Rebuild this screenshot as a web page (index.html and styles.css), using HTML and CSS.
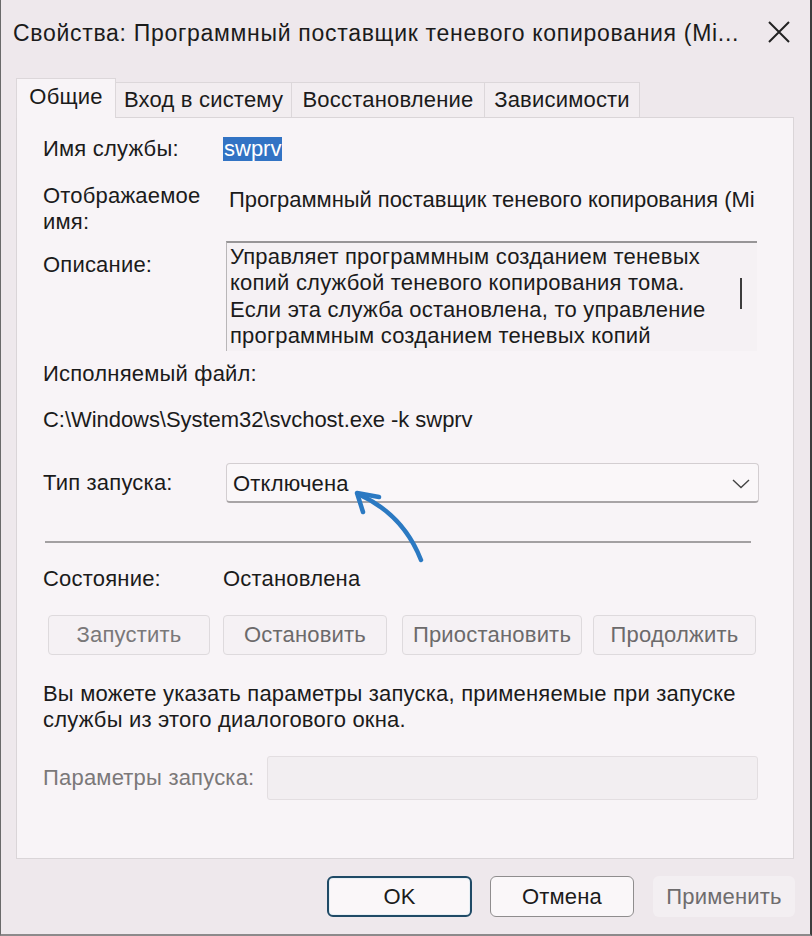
FILE: index.html
```html
<!DOCTYPE html>
<html lang="ru">
<head>
    <meta charset="UTF-8">
    <meta name="viewport" content="width=device-width, initial-scale=1.0">
    <title>Свойства службы</title>
    <link rel="stylesheet" href="styles.css">
</head>
<body>
    <div class="window">
        <div class="titlebar">
            <div class="title">Свойства: Программный поставщик теневого копирования (Mi...</div>
            <svg class="close" width="24" height="24" viewBox="0 0 24 24">
                <path d="M2 2 L22 22 M22 2 L2 22" stroke="#222" stroke-width="2" fill="none"/>
            </svg>
        </div>

        <div class="tabs">
            <div class="tab active tab-general">Общие</div>
            <div class="tab tab-logon">Вход в систему</div>
            <div class="tab tab-recovery">Восстановление</div>
            <div class="tab tab-deps">Зависимости</div>
        </div>

        <div class="panel">
            <div class="row row-name">
                <div class="label">Имя службы:</div>
                <div class="value"><span class="selected">swprv</span></div>
            </div>

            <div class="row row-display">
                <div class="label">Отображаемое<br>имя:</div>
                <div class="value display-name">Программный поставщик теневого копирования (Mi</div>
            </div>

            <div class="row row-desc">
                <div class="label">Описание:</div>
                <div class="desc-box">
                    <div class="desc-text">Управляет программным созданием теневых копий службой теневого копирования тома. Если эта служба остановлена, то управление программным созданием теневых копий</div>
                    <div class="scroll-thumb"></div>
                </div>
            </div>

            <div class="line line-exe">Исполняемый файл:</div>
            <div class="line line-path">C:\Windows\System32\svchost.exe -k swprv</div>

            <div class="row row-startup">
                <div class="label">Тип запуска:</div>
                <div class="dropdown">
                    <span>Отключена</span>
                    <svg width="18" height="10" viewBox="0 0 18 10">
                        <path d="M1 1 L9 8.5 L17 1" stroke="#444" stroke-width="1.4" fill="none"/>
                    </svg>
                </div>
            </div>

            <div class="separator"></div>

            <div class="row row-state">
                <div class="label">Состояние:</div>
                <div class="value">Остановлена</div>
            </div>

            <div class="svc-buttons">
                <div class="btn btn-start">Запустить</div>
                <div class="btn btn-stop">Остановить</div>
                <div class="btn btn-pause">Приостановить</div>
                <div class="btn btn-resume">Продолжить</div>
            </div>

            <div class="hint">Вы можете указать параметры запуска, применяемые при запуске службы из этого диалогового окна.</div>

            <div class="row row-params">
                <div class="label disabled">Параметры запуска:</div>
                <div class="param-input"></div>
            </div>
        </div>

        <div class="footer">
            <div class="fbtn fbtn-ok">OK</div>
            <div class="fbtn fbtn-cancel">Отмена</div>
            <div class="fbtn fbtn-apply">Применить</div>
        </div>

        <!-- стрелка-пометка поверх диалога -->
        <svg class="arrow" width="812" height="936" viewBox="0 0 812 936">
            <path d="M420 560 Q402 514 357 494" stroke="#2b79c2" stroke-width="4.5" fill="none" stroke-linecap="round"/>
            <path d="M378 497 L356 493 L362 512" stroke="#2b79c2" stroke-width="4.5" fill="none" stroke-linecap="round" stroke-linejoin="round"/>
        </svg>
    </div>
</body>
</html>
```

FILE: styles.css
```css
body {
    margin: 0;
    font-family: "Liberation Sans", Arial, sans-serif;
    font-size: 22px;
    letter-spacing: 0.2px;
    line-height: 26px;
    color: #1b1b1b;
    background-color: #efe9ed;
}

.window {
    position: relative;
    width: 809px;
    height: 934px;
    border-left: 1px solid #6a6a6a;
    border-right: 2px solid #3d3d3d;
    border-bottom: 2px solid #8c8a8b;
    background-color: #eee8ec;
    overflow: hidden;
}

.titlebar {
    height: 66px;
    display: flex;
    align-items: center;
    justify-content: space-between;
    padding: 0 19px 0 12px;
}

.title {
    font-size: 23px;
    letter-spacing: 0.7px;
    white-space: nowrap;
}

.close {
    margin-top: -2px;
}

.tabs {
    height: 51px;
    display: flex;
    align-items: flex-end;
    margin-left: 15px;
}

.tab {
    box-sizing: border-box;
    height: 35px;
    display: flex;
    align-items: center;
    justify-content: center;
    background-color: #f2edf0;
    border: 1px solid #dcd7da;
    border-bottom: none;
    border-left: none;
    white-space: nowrap;
}

.tab.active {
    height: 40px;
    margin-bottom: -1px;
    position: relative;
    background-color: #f8f4f7;
    border-left: 1px solid #dcd7da;
    padding-bottom: 3px;
}

.tab-general { width: 100px; }
.tab-logon { width: 176px; }
.tab-recovery { width: 193px; }
.tab-deps { width: 155px; }

.panel {
    box-sizing: border-box;
    margin-left: 15px;
    width: 778px;
    height: 742px;
    background-color: #f8f4f7;
    border: 1px solid #dad5d8;
    padding: 0 0 0 26px;
}

.row {
    display: grid;
    grid-template-columns: 180px 533px;
}

.label {
    white-space: nowrap;
}

.label.disabled {
    color: #7b7879;
}

.row-name {
    margin-top: 18px;
}

.selected {
    display: inline-block;
    background-color: #3273c4;
    color: #fff;
    padding: 0 1px;
    line-height: 24px;
    margin-top: 1px;
    letter-spacing: 0;
}

.row-display {
    margin-top: 21px;
}

.display-name {
    padding-left: 6px;
    padding-top: 4px;
    white-space: nowrap;
    overflow: hidden;
    letter-spacing: -0.05px;
}

.row-desc {
    margin-top: 6px;
}

.row-desc .label {
    padding-top: 11px;
}

.desc-box {
    position: relative;
    box-sizing: border-box;
    margin-left: 3px;
    width: 531px;
    height: 110px;
    border-top: 2px solid #979597;
    border-left: 1px solid #b9b6b8;
    background-color: #f5f1f4;
    padding: 1px 30px 0 3px;
    overflow: hidden;
}

.desc-text {
    line-height: 26.4px;
}

.scroll-thumb {
    position: absolute;
    left: 513px;
    top: 35px;
    width: 2px;
    height: 31px;
    background-color: #3c3c3c;
}

.line-exe {
    margin-top: 10px;
}

.line-path {
    margin-top: 20px;
    letter-spacing: -0.05px;
}

.row-startup {
    margin-top: 30px;
    align-items: center;
}

.dropdown {
    box-sizing: border-box;
    margin-left: 3px;
    width: 533px;
    height: 40px;
    display: flex;
    align-items: center;
    justify-content: space-between;
    padding: 2px 8px 0 6px;
    background-color: #faf7f9;
    border: 1px solid #d3ced1;
    border-bottom: 2px solid #a8a4a6;
    border-radius: 4px;
}

.separator {
    margin-top: 38px;
    margin-left: 2px;
    width: 706px;
    height: 2px;
    background-color: #a3a0a2;
}

.row-state {
    margin-top: 23px;
}

.svc-buttons {
    display: flex;
    margin: 23px 0 0 5px;
}

.btn {
    box-sizing: border-box;
    height: 40px;
    display: flex;
    align-items: center;
    justify-content: center;
    background-color: #f5f1f4;
    border: 1px solid #dedadd;
    border-radius: 4px;
    color: #6c6a6b;
}

.btn-start { width: 162px; color: #7a7879; }
.btn-stop { width: 164px; margin-left: 13px; }
.btn-pause { width: 180px; margin-left: 15px; }
.btn-resume { width: 163px; margin-left: 11px; }

.hint {
    margin-top: 26px;
    width: 712px;
}

.row-params {
    margin-top: 23px;
    grid-template-columns: 224px 491px;
    align-items: center;
}

.param-input {
    box-sizing: border-box;
    height: 44px;
    background-color: #f2eef1;
    border: 1px solid #e3dee1;
    border-radius: 3px;
}

.footer {
    display: flex;
    justify-content: flex-end;
    padding: 17px 15px 0 0;
}

.fbtn {
    box-sizing: border-box;
    height: 41px;
    display: flex;
    align-items: center;
    justify-content: center;
    border-radius: 6px;
}

.fbtn-ok {
    width: 145px;
    border: 2px solid #1f4a66;
    background-color: #faf7f9;
    box-shadow: inset 0 0 0 1px #e8f0f5;
}

.fbtn-cancel {
    width: 144px;
    margin-left: 18px;
    border: 1px solid #8f8d8e;
    background-color: #faf7f9;
}

.fbtn-apply {
    width: 142px;
    margin-left: 19px;
    background-color: #f3eff2;
    color: #6e6c6d;
}

.arrow {
    position: absolute;
    left: 0;
    top: 0;
    pointer-events: none;
}
```
